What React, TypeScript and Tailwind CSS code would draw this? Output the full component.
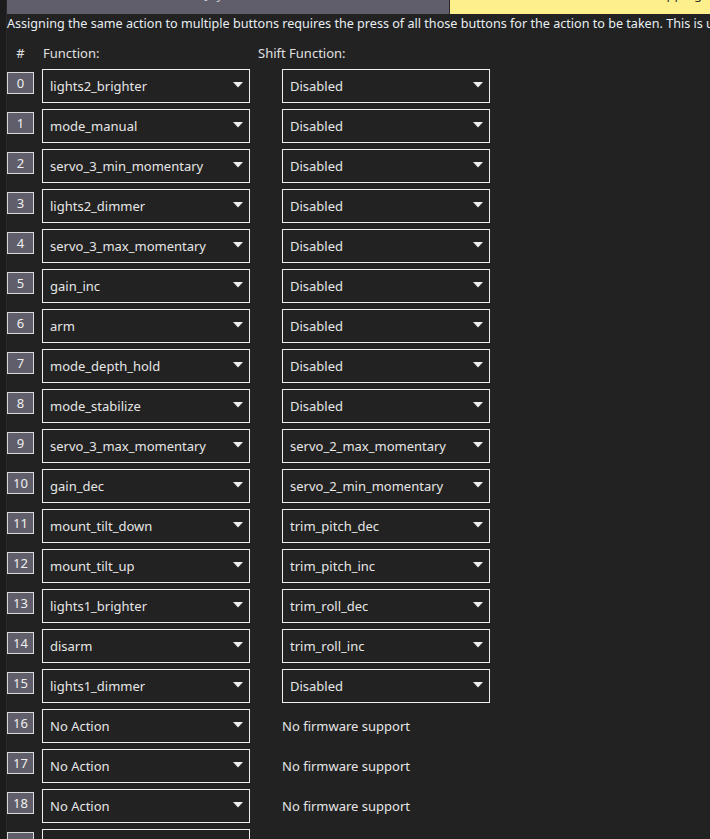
import React from "react";

type Row = { fn: string; shift: string | null };

const rows: Row[] = [
  { fn: "lights2_brighter", shift: "Disabled" },
  { fn: "mode_manual", shift: "Disabled" },
  { fn: "servo_3_min_momentary", shift: "Disabled" },
  { fn: "lights2_dimmer", shift: "Disabled" },
  { fn: "servo_3_max_momentary", shift: "Disabled" },
  { fn: "gain_inc", shift: "Disabled" },
  { fn: "arm", shift: "Disabled" },
  { fn: "mode_depth_hold", shift: "Disabled" },
  { fn: "mode_stabilize", shift: "Disabled" },
  { fn: "servo_3_max_momentary", shift: "servo_2_max_momentary" },
  { fn: "gain_dec", shift: "servo_2_min_momentary" },
  { fn: "mount_tilt_down", shift: "trim_pitch_dec" },
  { fn: "mount_tilt_up", shift: "trim_pitch_inc" },
  { fn: "lights1_brighter", shift: "trim_roll_dec" },
  { fn: "disarm", shift: "trim_roll_inc" },
  { fn: "lights1_dimmer", shift: "Disabled" },
  { fn: "No Action", shift: null },
  { fn: "No Action", shift: null },
  { fn: "No Action", shift: null },
  { fn: "No Action", shift: null },
];

function Select({ value }: { value: string }) {
  return (
    <div className="flex h-[34px] w-[208px] shrink-0 items-center justify-between border border-[#f0f0f0] bg-[#222222] pl-[7px] pr-[6px] text-[#e6e6e6]">
      <span className="leading-[18px]">{value}</span>
      <svg width="10" height="6" viewBox="0 0 10 6" className="mb-[2px]">
        <path d="M0 0h10L5 5.5z" fill="#eeeeee" />
      </svg>
    </div>
  );
}

export default function App() {
  return (
    <div
      className="flex h-[839px] w-[710px] overflow-hidden bg-[#222222] text-[13px] text-[#e6e6e6]"
      style={{ fontFamily: '"Noto Sans", "Open Sans", sans-serif' }}
    >
      <div className="w-[7px] shrink-0 border-r border-[#2a2a2a] bg-[#1c1c1c]" />
      <div className="flex min-w-0 flex-1 flex-col">
        {/* tab strip, scrolled almost out of view */}
        <div className="flex h-[14px] shrink-0 overflow-hidden">
          <div className="flex w-[442px] items-start justify-center overflow-hidden bg-[#5f5e6a] text-[#c8c8d0]">
            <span className="mt-[-15px] leading-[18px]">Joystick</span>
          </div>
          <div className="w-px bg-[#2a2a2a]" />
          <div className="flex flex-1 items-start justify-end overflow-hidden bg-[#fdef8c] pr-[8px] text-[#333]">
            <span className="mt-[-15px] leading-[18px]">Button Mapping</span>
          </div>
        </div>

        <p className="mt-[1px] whitespace-nowrap text-[12.6px] leading-[18px] text-[#e8eef2]">
          Assigning the same action to multiple buttons requires the press of all those buttons for the action to be taken. This is useful for combinations.
        </p>

        <div className="mt-[11px] flex leading-[18px] text-[#e0e0e0]">
          <span className="w-[27px] text-center">#</span>
          <span className="ml-[9px] w-[215px]">Function:</span>
          <span>Shift Function:</span>
        </div>

        <div className="mt-[7px] flex flex-col gap-[6px]">
          {rows.map((r, i) => (
            <div key={i} className="flex h-[34px] items-start">
              <div className="mt-[3px] flex h-[22px] w-[27px] shrink-0 items-center justify-center border border-[#d8d8d8] bg-[#5f5e6a] leading-none text-[#f0f0f0]">
                {i}
              </div>
              <div className="ml-[8px]">
                <Select value={r.fn} />
              </div>
              <div className="ml-[32px] flex h-[34px] items-center">
                {r.shift ? (
                  <Select value={r.shift} />
                ) : (
                  <span className="leading-[18px]">No firmware support</span>
                )}
              </div>
            </div>
          ))}
        </div>
      </div>
    </div>
  );
}
